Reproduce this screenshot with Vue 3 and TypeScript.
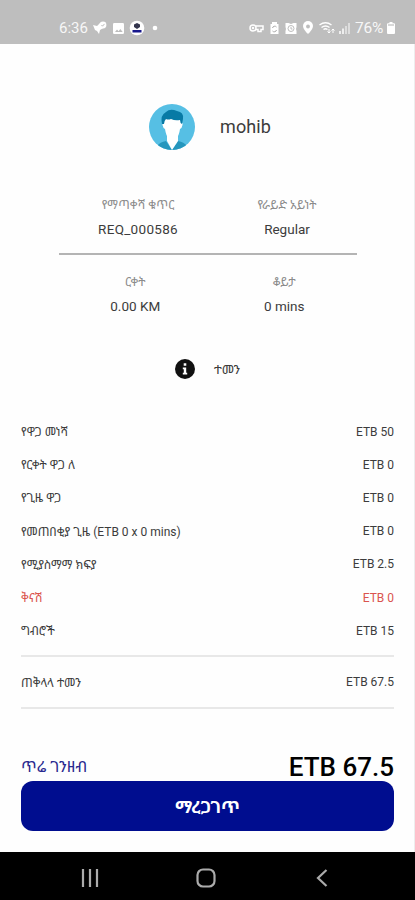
<script setup lang="ts">
interface FareRow {
  label: string
  amount: string
  discount?: boolean
}

const fares: FareRow[] = [
  { label: 'የዋጋ መነሻ', amount: 'ETB 50' },
  { label: 'የርቀት ዋጋ ለ', amount: 'ETB 0' },
  { label: 'የጊዜ ዋጋ', amount: 'ETB 0' },
  { label: 'የመጠበቂያ ጊዜ (ETB 0 x 0 mins)', amount: 'ETB 0' },
  { label: 'የሚያስማማ ክፍያ', amount: 'ETB 2.5' },
  { label: 'ቅናሽ', amount: 'ETB 0', discount: true },
  { label: 'ግብሮች', amount: 'ETB 15' },
]
</script>

<template>
  <div class="screen">
    <header class="status">
      <span class="clock">6:36</span>
      <svg class="s-left" width="68" height="16" viewBox="0 0 68 16">
        <path d="M1 5l4 1 3-3 2 3 3 1-5 3-1 4-2-3-2-1z" fill="#fff" />
        <circle cx="11" cy="5" r="3.4" fill="#fff" />
        <path d="M9.5 5l1 1.2 2-2.3" stroke="#bdbdbd" fill="none" />
        <rect x="21" y="3" width="11" height="11" rx="1.2" fill="#fff" />
        <path d="M23 12l2-2.5 1.6 1.8 1.7-2.3 2.4 3z" fill="#bdbdbd" />
        <circle cx="45" cy="8" r="7.3" fill="#fff" />
        <path d="M42 4.5l3-1.5 3 1.500v2.500l-3 2-3-2z" fill="#34364e" />
        <rect x="40.500" y="10" width="9" height="2.500" fill="#17178c" />
        <circle cx="63" cy="8" r="2.300" fill="#fff" />
      </svg>
      <svg class="s-right" width="104" height="16" viewBox="0 0 104 16">
        <g fill="none" stroke="#fff" stroke-width="1.500">
          <circle cx="4" cy="8" r="3" />
          <circle cx="4" cy="8" r=".5" />
          <path d="M7 6h7v3.500h-2v2H9v-2H7" />
        </g>
        <path d="M23 2h5v2h1.500v10h-8V4H23z" fill="#fff" />
        <path d="M23.500 8a2.300 2.300 0 0 1 4-1M27.500 10a2.300 2.300 0 0 1-4 1" stroke="#aaa" fill="none" />
        <path d="M36.500 3h3l2.500 1 2.500-1h3v4l-.5 2 .5 2v3h-11v-3l.5-2-.5-2z" fill="#fff" />
        <circle cx="42" cy="8.500" r="3" fill="none" stroke="#bdbdbd" />
        <path d="M42 7v2h1.500" stroke="#bdbdbd" fill="none" />
        <path d="M59 14s-5-4.500-5-8a5 5 0 0 1 10 0c0 3.500-5 8-5 8z" fill="#fff" />
        <circle cx="59" cy="6.500" r="1.900" fill="#bdbdbd" />
        <g fill="none" stroke="#fff" stroke-width="1.400">
          <path d="M70.500 5q6-4.500 12 0M72.500 7.500q4-3 8 0M74.500 9.500q2-1.500 4 0" />
          <path d="M80 9v4M78.500 11.500L80 13l1.500-1.500M84 13V9m-1.500 1.500L84 9l1.500 1.500" stroke-width="1" />
        </g>
        <path d="M90 11h2v3h-2zM93 8.500h2V14h-2z" fill="#eee" />
        <path d="M96 6h2v8h-2zM99 3h2v11h-2z" fill="#ddd" />
      </svg>
      <span class="percent">76%</span>
      <svg class="battery" width="8" height="12" viewBox="0 0 8 12">
        <path d="M2.500 0h3v1.200H7A1 1 0 0 1 8 2.200V11a1 1 0 0 1-1 1H1a1 1 0 0 1-1-1V2.200a1 1 0 0 1 1-1h1.500z" fill="#fff" />
        <path d="M1 2h6v2H1z" fill="#d8d8d8" />
      </svg>
    </header>

    <main class="content">
      <section class="profile">
        <svg class="avatar" width="46" height="46" viewBox="0 0 46 46">
          <defs><clipPath id="disc"><circle cx="23" cy="23" r="23" /></clipPath></defs>
          <g clip-path="url(#disc)">
            <rect width="46" height="46" fill="#56bfe4" />
            <path d="M8 42q3-4 9-5l6 9 6-9q6 1 9 5v6H8z" fill="#2596bd" />
            <path d="M18 30v7l5 9 6-9v-7z" fill="#fff" />
            <path d="M15 15q8-4 17 0v4q2-1 1.500 2t-2.500 4q-1 7-4 10-3.500 3-7 0-3-3-4-10-2-1-2.500-4t1.500-2z" fill="#fff" />
            <path d="M13 20Q11 11 17 8q4-4 11-1 7 1 6 8l-1 5q-2-1-2-4-5 1-9-1-3 1-5 0-2 2-2 5z" fill="#087aa5" />
          </g>
        </svg>
        <span class="name">mohib</span>
      </section>

      <section class="details">
        <div class="pair top">
          <div class="cell left"><span class="caption">የማጣቀሻ ቁጥር</span><span class="value">REQ_000586</span></div>
          <div class="cell right"><span class="caption">የራይድ አይነት</span><span class="value">Regular</span></div>
        </div>
        <div class="pair bottom">
          <div class="cell left"><span class="caption">ርቀት</span><span class="value">0.00 KM</span></div>
          <div class="cell right"><span class="caption">ቆይታ</span><span class="value">0 mins</span></div>
        </div>
      </section>

      <section class="fare-title">
        <svg width="20" height="20" viewBox="0 0 20 20">
          <circle cx="10" cy="10" r="10" fill="#111" />
          <path d="M8.700 4.300h2.600v2.500H8.700zM7.800 8.500h3.400v5.200h1v1.800H7.800v-1.800h1v-3.400h-1z" fill="#fff" />
        </svg>
        <span>ተመን</span>
      </section>

      <section class="fares">
        <div v-for="row in fares" :key="row.label" class="fare" :class="{ discount: row.discount }">
          <span>{{ row.label }}</span><span>{{ row.amount }}</span>
        </div>
      </section>
      <section class="total"><span>ጠቅላላ ተመን</span><span>ETB 67.5</span></section>

      <section class="cash">
        <span class="method">ጥሬ ገንዘብ</span>
        <strong>ETB 67.5</strong>
      </section>
      <button class="confirm" type="button">ማረጋገጥ</button>
    </main>

    <nav class="nav">
      <svg width="18" height="20" viewBox="0 0 18 20"><path d="M2 1v18M9 1v18M16 1v18" /></svg>
      <svg class="home" width="20" height="20" viewBox="0 0 20 20"><rect x="1.500" y="1.500" width="17" height="17" rx="5.500" /></svg>
      <svg class="back" width="12" height="20" viewBox="0 0 12 20"><path d="M10.500 2L2 10l8.500 8" /></svg>
    </nav>
  </div>
</template>

<style>
body { background: #fefefe; }
</style>

<style scoped>
.screen {
  box-sizing: border-box;
  width: 415px;
  height: 900px;
  display: flex;
  flex-direction: column;
  overflow: hidden;
  color: #3c3c3c;
  font-family: Roboto, "Noto Sans Ethiopic", "Noto Sans", "DejaVu Sans", sans-serif;
}
.status {
  box-sizing: border-box;
  height: 44px;
  flex: none;
  display: flex;
  align-items: center;
  padding: 12px 20px 0 59px;
  background: #bebebe;
  color: #f7f7f7;
  font-size: 15px;
}
.clock { width: 33px; }
.s-right { margin-left: auto; }
.percent { width: 30px; margin-left: 2px; font-size: 15.500px; letter-spacing: -0.2px; }
.battery { margin-left: 2px; }
.content {
  flex: 1;
  min-height: 0;
  padding: 0 20px 0 21px;
  border-right: 1px solid #ededed;
}
.profile {
  display: flex;
  align-items: center;
  height: 46px;
  padding: 60px 0 0 128px;
}
.name { margin: -2px 0 0 25px; font-size: 18px; letter-spacing: .1px; }
.details { padding: 42px 37px 0 38px; }
.pair { display: flex; justify-content: space-between; }
.top { height: 61px; border-bottom: 2px solid #b4b4b4; }
.bottom { height: 63px; padding-top: 14px; }
.cell { display: flex; flex-direction: column; align-items: center; white-space: nowrap; }
.left { width: 158px; }
.right { width: 140px; }
.bottom .left { width: 153px; }
.bottom .right { width: 146px; }
.caption { height: 25px; line-height: 26px; color: #8b8b8b; font-size: 12px; }
.top .left .caption { letter-spacing: .1px; }
.value { height: 24px; line-height: 24px; font-size: 13.500px; }
.top .left .value { letter-spacing: .3px; }
.fare-title {
  height: 21px;
  display: flex;
  align-items: center;
  gap: 19px;
  padding: 26px 0 0 154px;
  font-size: 13px;
}
.fares { padding: 36px 0 8px; border-bottom: 2px solid #e8e8e8; }
.fare { display: flex; align-items: center; justify-content: space-between; height: 33.200px; font-size: 12px; }
.discount { color: #da544e; }
.total { height: 50px; display: flex; align-items: center; justify-content: space-between; border-bottom: 2px solid #e8e8e8; font-size: 12px; }
.cash { height: 72px; display: flex; align-items: flex-end; justify-content: space-between; color: #000; }
.method { line-height: 28px; color: #29298f; font-size: 15.800px; }
.cash strong { font-size: 26px; line-height: 28px; font-weight: 500; }
.confirm { display: block; width: 100%; height: 50px; padding: 0; border: 0; border-radius: 12px; background: #000d8f; color: #fff; font: 700 17px Roboto, "Noto Sans Ethiopic", sans-serif; }
.nav { flex: none; height: 48px; display: flex; align-items: center; padding: 3px 87px 0 81px; box-sizing: border-box; background: #000; }
.home { margin-left: 97px; }
.back { margin-left: 100px; }
.nav path, .nav rect { fill: none; stroke: #ababab; stroke-width: 2.200; }
</style>
